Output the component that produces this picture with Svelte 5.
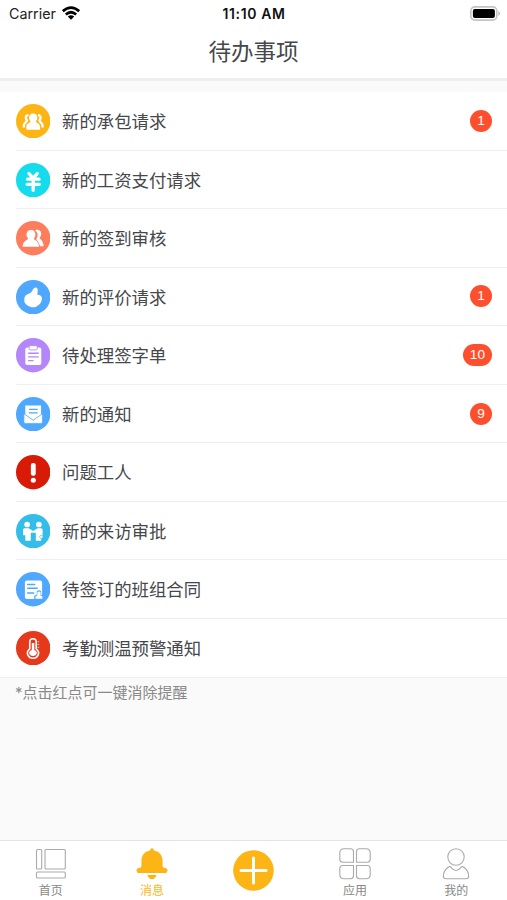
<script lang="ts">
  export let activeTab = 'message';

  const items = [
    { icon: 'team', label: '新的承包请求', color: '#fdb515', count: 1 },
    { icon: 'salary', label: '新的工资支付请求', color: '#15dcec', count: 0 },
    { icon: 'checkin', label: '新的签到审核', color: '#fd7d5d', count: 0 },
    { icon: 'thumb', label: '新的评价请求', color: '#4fa8fd', count: 1 },
    { icon: 'clipboard', label: '待处理签字单', color: '#b386fa', count: 10 },
    { icon: 'mail', label: '新的通知', color: '#4fa8fd', count: 9 },
    { icon: 'warning', label: '问题工人', color: '#d81b06', count: 0 },
    { icon: 'visit', label: '新的来访审批', color: '#35bde9', count: 0 },
    { icon: 'contract', label: '待签订的班组合同', color: '#4fa8fd', count: 0 },
    { icon: 'temperature', label: '考勤测温预警通知', color: '#e6391b', count: 0 }
  ];

  const tabs = [
    { id: 'home', label: '首页' },
    { id: 'message', label: '消息' },
    { id: 'add', label: '' },
    { id: 'apps', label: '应用' },
    { id: 'mine', label: '我的' }
  ];
</script>

<div class="screen">
  <header>
    <div class="status-bar">
      <div class="carrier">
        <span>Carrier</span>
        <svg width="18" height="14" viewBox="0 0 18 14">
          <g fill="none" stroke="#000" stroke-width="2.7">
            <path d="M.8 5.2Q9-1.8 17.2 5.2" />
            <path d="M3.8 8.5Q9 4 14.2 8.5" />
          </g>
          <path d="M5.8 10.5Q9 7.9 12.2 10.5L9 13.8Z" />
        </svg>
      </div>
      <span class="time">11:10 AM</span>
      <svg class="battery" width="31" height="15" viewBox="0 0 31 15">
        <rect x=".8" y=".9" width="26" height="13.2" rx="4" fill="#fff" stroke="#c4c4c4" stroke-width="1.6" />
        <rect x="2.9" y="2.9" width="22" height="9.2" rx="2" />
        <path d="M28.5 5Q31.2 7.5 28.5 10Z" fill="#aaa" />
      </svg>
    </div>
    <h1>待办事项</h1>
  </header>

  <main>
    <ul class="list">
      {#each items as item}
        <li class="row">
          <svg class="icon" viewBox="0 0 34 34" fill="#fff">
            <circle cx="17" cy="17" r="17" fill={item.color} />
            {#if item.icon === 'team'}
              <path d="M17 9.3c2.8 0 4.1 1.8 4.1 4.1 0 1.6-.6 2.9-1.5 3.8.4 1.5 4.2 2 4.2 5.1v3.2H10.2v-3.2c0-3.1 3.8-3.6 4.2-5.1-.9-.9-1.5-2.2-1.5-3.8 0-2.3 1.3-4.1 4.1-4.1Z" />
              <g fill="none" stroke="#fff" stroke-width="2.3">
                <path d="M12.3 11c-3.3.3-3 3.3-1.5 5.3-.2 2-3 2.3-3 4.7v2.2" />
                <path d="M21.7 11c3.3.3 3 3.3 1.5 5.3.2 2 3 2.3 3 4.7v2.2" />
              </g>
            {:else if item.icon === 'salary'}
              <path d="m12.8 10.4 4.2 4.8 4-4.8M11.4 16h11.4M11 21.1h12M17 15v12" fill="none" stroke="#fff" stroke-width="3.3" stroke-linecap="round" />
            {:else if item.icon === 'checkin'}
              <path d="M18.7 9.2c4.2-1.7 6.9 1.2 6.1 4.6-.3 1.2-.8 1.8-1.4 2.5.3 2 3.8 3.2 3.9 8.6h-3.6c-.6-4.4-3.4-5.2-3.6-7.3 1.9-2.3 2-6.1-1.4-8.4Z" />
              <path d="M14.8 9c2.9 0 4.4 1.9 4.4 4.4 0 1.7-.7 2.9-1.6 3.9.4 1.9 5.2 2 5.2 8.1H6.6c0-6.1 5-6.2 5.4-8.1-.9-1-1.6-2.2-1.6-3.9 0-2.5 1.5-4.4 4.4-4.4Z" />
            {:else if item.icon === 'thumb'}
              <path d="M18.3 7.8c1.7-.9 3.4.4 3.2 2.5l-.4 4.2c2.5-.1 4.5 1.4 4.5 3.5 0 2.9-1.2 5.4-3.5 7-1.4 1.3-3.2 2-5.1 2-2 0-3.9-.7-5.6-1.8-2-1.2-3.3-3-3.2-5.3 0-3.2.9-4.7 2.8-5.6 2.2-.9 3.7-1.5 4.4-2.6.9-1.3 1.2-3.1 2.9-3.9Z" />
            {:else if item.icon === 'clipboard'}
              <rect x="9.2" y="9.3" width="15.8" height="17.5" rx="1.8" />
              <rect x="13" y="7.6" width="8" height="4.2" rx="1" stroke={item.color} stroke-width=".8" />
              <path d="M12 15.1h10.5M12 18.7h10.5M12 22.4h5.4" stroke={item.color} stroke-width="1.3" />
            {:else if item.icon === 'mail'}
              <path d="M9.2 8.5h15.6v9L17 22.8l-7.8-5.3Z" />
              <path d="M12.8 12.3h8.6M12.8 15.7h8.6" stroke={item.color} stroke-width="1.2" />
              <path d="M7.8 16.5 17 23l9.2-6.5v8.3q0 1.3-1.3 1.3H9.1q-1.3 0-1.3-1.3Z" stroke={item.color} stroke-width=".7" />
            {:else if item.icon === 'warning'}
              <rect x="14.7" y="7.8" width="4.8" height="12.6" rx="2.2" />
              <circle cx="17.1" cy="24.9" r="2.5" />
            {:else if item.icon === 'visit'}
              <circle cx="11" cy="10.4" r="2.8" />
              <circle cx="22.6" cy="10.4" r="2.8" />
              <path d="M8.4 14.2h4.2l4.3 2.6 4.5-2.6h3.4q1.5 0 1.5 1.7v5.2l-1.7 5.4h-5v-8h-5v8H9.2v-5.6H7v-5q0-1.7 1.4-1.7Z" />
              <circle cx="25" cy="22.6" r="1.6" stroke={item.color} stroke-width=".6" />
            {:else if item.icon === 'contract'}
              <rect x="8.8" y="8.3" width="17" height="18.4" rx="2" />
              <path d="M11.5 12.3h7M11.5 16h9.5M11.5 20.7h6" stroke={item.color} stroke-width="1.4" stroke-linecap="round" />
              <path d="M18 27.2v-3.6l2.5-1.1v-3.3q2.2-2.3 4.4 0v3.3l2.5 1.1v3.6Z" fill={item.color} />
              <path d="M19.2 26.4v-2.1l1.9-1v-3.4q1.6-1.4 3.2 0v3.4l1.8 1v2.1Z" />
            {:else}
              <path d="M13.6 17.7v-7.1q0-3 3.2-3t3.2 3v7.1c4.9 4 1.2 9.2-3.2 9.2s-8.1-5.2-3.2-9.2Z" fill="none" stroke="#fff" stroke-width="1.6" />
              <path d="M15.6 11.8h2.5v7c4.2 1.5 2.8 5.9-1.3 5.9s-5.4-4.4-1.2-5.9Z" />
              <path d="M21.2 10.7h1.8M21.2 13.4h1.8M21.2 16.1h1.8" stroke="#fff" stroke-width=".8" opacity=".8" />
            {/if}
          </svg>
          <div class="row-content">
            <span class="label">{item.label}</span>
            {#if item.count}
              <span class="badge">{item.count}</span>
            {/if}
          </div>
        </li>
      {/each}
    </ul>
    <p class="hint">*点击红点可一键消除提醒</p>
  </main>

  <nav>
    {#each tabs as tab}
      <button class="tab" class:active={activeTab === tab.id} on:click={() => (activeTab = tab.id)}>
        {#if tab.id === 'home'}
          <svg width="32" height="32" viewBox="0 0 32 32">
            <rect x="1.5" y="1.5" width="5.2" height="19.5" rx="1" />
            <rect x="10" y="1.5" width="20.3" height="19.5" rx="1" />
            <rect x="1.5" y="24" width="28.8" height="6" rx="1" />
          </svg>
        {:else if tab.id === 'message'}
          <svg class="solid" width="32" height="32" viewBox="0 0 32 32">
            <path d="M16 .3c1.3 0 1.7.8 1.8 2.1 5.8 1 8.8 5 8.8 10.7v4.5c0 2.4 1.2 2.3 3.4 2.7 2.1.5 1.8 4.8-.4 4.8H2.4c-2.2 0-2.5-4.3-.4-4.8 2.2-.4 3.4-.3 3.4-2.7v-4.5c0-5.7 3-9.7 8.8-10.7C14.3 1.1 14.7.3 16 .3ZM11.5 27h9c-.7 2.7-2.2 4.2-4.5 4.2S12.2 29.7 11.5 27Z" />
          </svg>
        {:else if tab.id === 'add'}
          <svg class="add" width="42" height="42" viewBox="0 0 42 42">
            <circle cx="21.5" cy="20.5" r="20.3" />
            <path d="M9 20.5h25M21.5 8v25" />
          </svg>
        {:else if tab.id === 'apps'}
          <svg width="32" height="32" viewBox="0 0 32 32">
            <path d="M5 .8h6.5q3 0 3 3v10.5H3.8q-3 0-3-3V5Q.8.8 5 .8ZM20.5.8H27Q31.2.8 31.2 5v6.3q0 3-3 3H17.5V3.8q0-3 3-3ZM3.8 17.5h10.7v10.2q0 3-3 3H5q-4.2 0-4.2-4.2v-6q0-3 3-3ZM17.5 17.5h10.7q3 0 3 3v6q0 4.2-4.2 4.2h-6.5q-3 0-3-3Z" />
          </svg>
        {:else}
          <svg width="32" height="32" viewBox="0 0 32 32">
            <circle cx="16" cy="9" r="8.2" />
            <path d="M10 18.3c-3.5 1.6-5.8 4.3-6.5 8.2-.6 3.2.2 4.2 3.1 4.2h18.8c2.9 0 3.7-1 3.1-4.2-.7-3.9-3-6.6-6.5-8.2-1.5 1.3-3 4.2-6 4.2s-4.5-2.9-6-4.2Z" />
          </svg>
        {/if}
        {#if tab.label}
          <span>{tab.label}</span>
        {/if}
      </button>
    {/each}
  </nav>
</div>

<style>
  :global(body) {
    margin: 0;
  }

  .screen {
    display: flex;
    flex-direction: column;
    height: 100vh;
    background: #fafafa;
    color: #45474b;
    font-family: Inter, 'Noto Sans CJK SC', sans-serif;
    overflow: hidden;
  }

  header {
    height: 78px;
    flex: none;
    background: #fff;
    border-bottom: 3px solid #eee;
  }

  .status-bar {
    display: grid;
    grid-template-columns: 1fr auto 1fr;
    align-items: center;
    height: 27px;
    padding: 0 6px 0 9px;
    color: #222;
    font-size: 14.3px;
  }

  .carrier {
    display: flex;
    align-items: center;
    gap: 6px;
  }

  .carrier svg {
    margin-top: -2px;
  }

  .time {
    margin-right: 2px;
    color: #111;
    font-weight: 600;
    font-size: 14px;
    letter-spacing: 0.6px;
  }

  .battery {
    justify-self: end;
    margin-top: -1px;
  }

  h1 {
    margin: 8px 0 0;
    font-size: 22.5px;
    font-weight: 400;
    line-height: 34px;
    text-align: center;
  }

  main {
    flex: 1;
    min-height: 0;
    padding-top: 11px;
  }

  .list {
    margin: 0;
    padding: 0;
    list-style: none;
    background: #fff;
    border-bottom: 1px solid #eee;
  }

  .row {
    display: flex;
    align-items: center;
    height: 58.55px;
    padding-left: 15.6px;
  }

  .icon {
    width: 34.4px;
    height: 34.4px;
    flex: none;
    margin-right: -34.4px;
  }

  .row-content {
    display: flex;
    align-items: center;
    justify-content: space-between;
    flex: 1;
    box-sizing: border-box;
    height: 100%;
    padding: 0 15px 0 46.4px;
    border-bottom: 1px solid #eee;
  }

  .row:last-child .row-content {
    border-bottom: none;
  }

  .label {
    margin-top: -0.5px;
    font-size: 17.4px;
  }

  .badge {
    box-sizing: border-box;
    min-width: 22px;
    height: 22px;
    padding: 0 7px;
    border-radius: 11px;
    background: #fd4f2e;
    color: #fff;
    font-family: 'Liberation Sans', sans-serif;
    font-size: 13.7px;
    line-height: 22px;
    text-align: center;
  }

  .hint {
    margin: 4px 0 0 15px;
    color: #888;
    font-size: 15px;
    line-height: 22px;
  }

  nav {
    display: grid;
    grid-template-columns: repeat(5, 1fr);
    flex: none;
    height: 59px;
    background: #fff;
    border-top: 1px solid #e3e3e3;
  }

  .tab {
    display: flex;
    flex-direction: column;
    align-items: center;
    padding: 7px 0 0;
    border: none;
    background: transparent;
    color: #888;
    font-family: inherit;
    font-size: 12px;
    line-height: 18px;
  }

  .tab svg {
    flex: none;
    margin-bottom: 2px;
    fill: none;
    stroke: #aaa;
    stroke-width: 1.1;
  }

  .tab.active {
    color: #fdb515;
  }

  .tab .solid {
    fill: #fdb515;
    stroke: none;
  }

  .tab .add {
    margin-top: 2px;
    fill: #fdb515;
    stroke: none;
  }

  .add path {
    stroke: #fff;
    stroke-width: 3;
    stroke-linecap: round;
  }
</style>
